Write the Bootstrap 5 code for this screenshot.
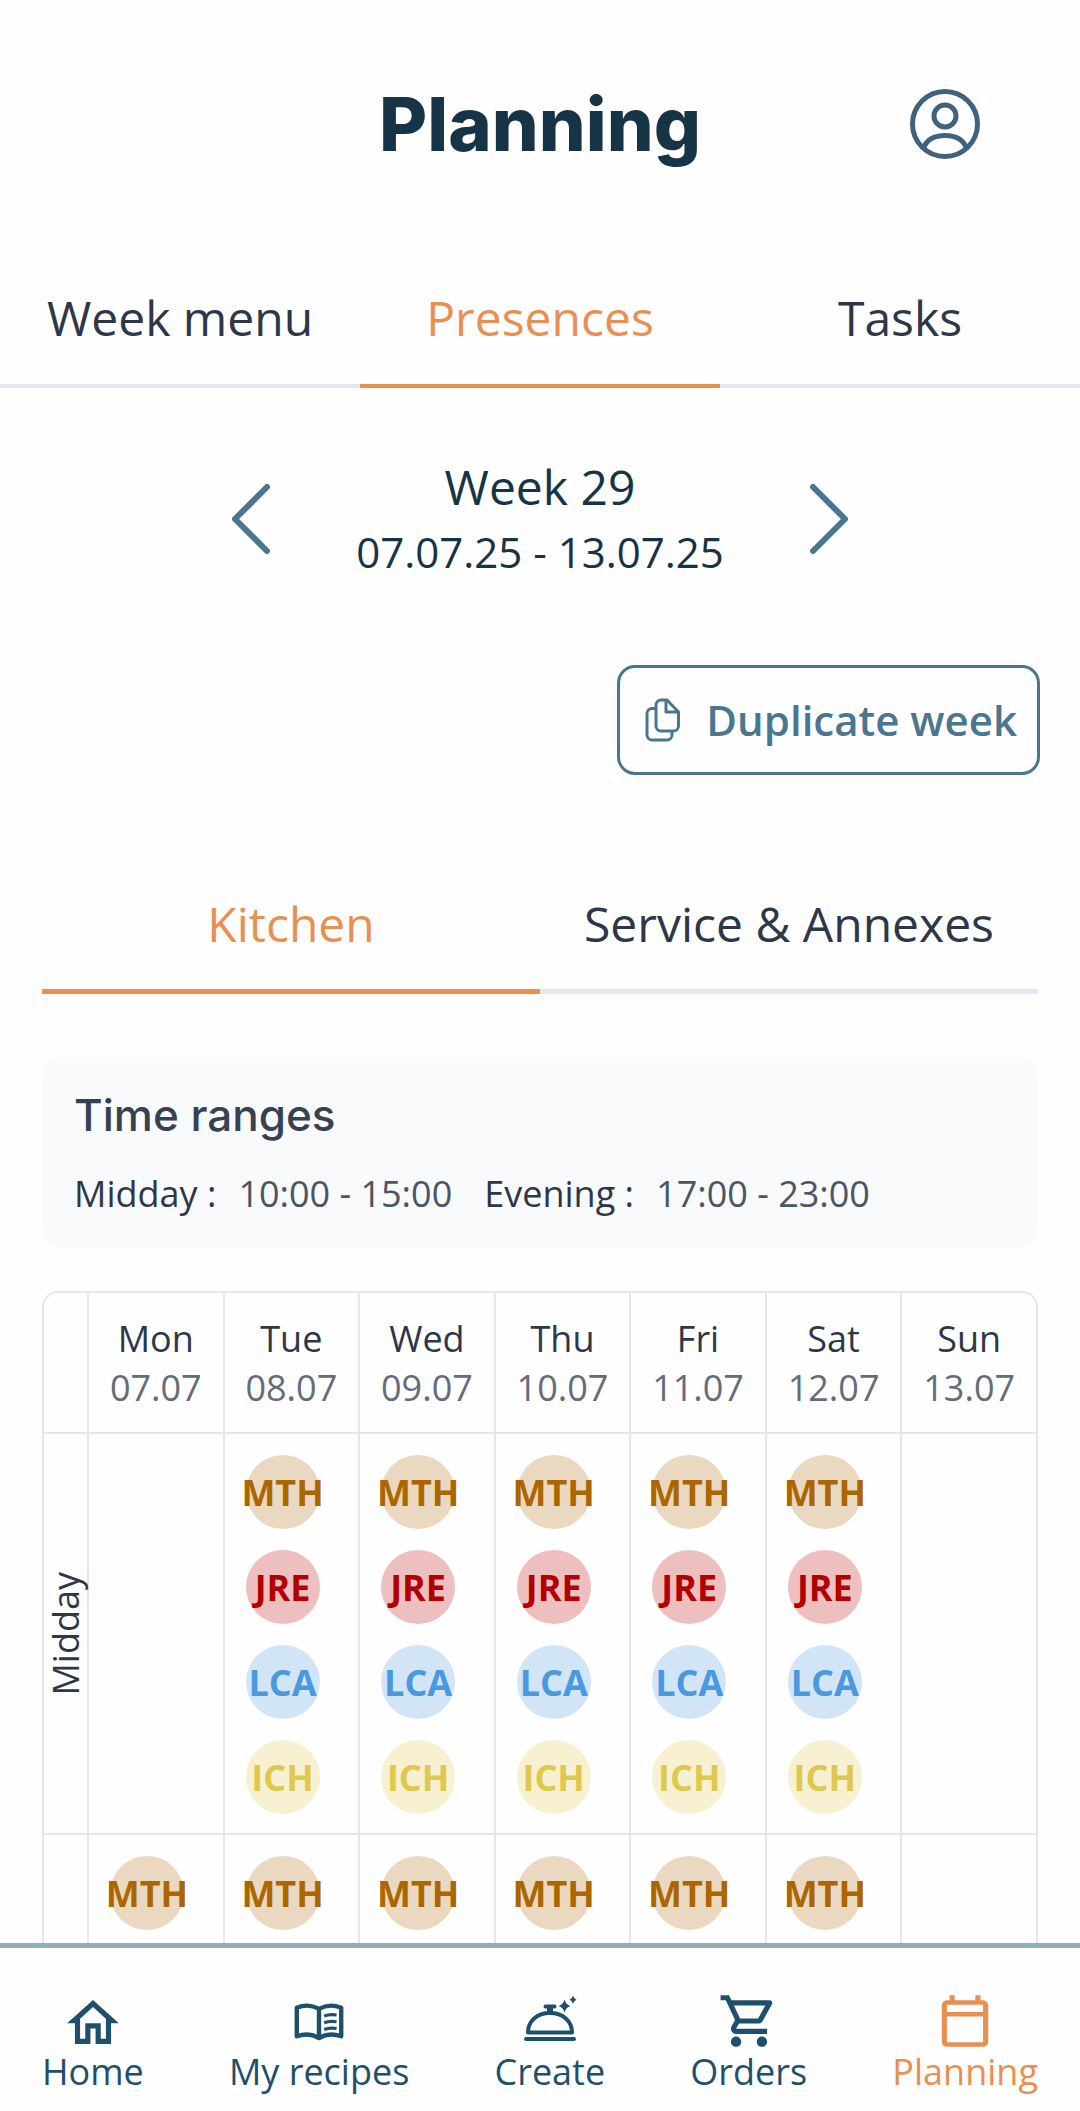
<!DOCTYPE html>
<html lang="en">
<head>
<meta charset="utf-8">
<meta name="viewport" content="width=device-width, initial-scale=1">
<title>Planning</title>
<link href="https://cdn.jsdelivr.net/npm/bootstrap@5.3.0/dist/css/bootstrap.min.css" rel="stylesheet">
<style>
  :root { --ink: #2d3748; --navy: #173447; --steel: #4a7690; --orange: #e88f51; --rule: #e2e8f0; --grid: #e5e7eb; --deep: #1f506b; }
  body { font-family: "Open Sans", "Noto Sans", sans-serif; color: var(--ink); background: #fefefe; font-size: 36px; line-height: 49px; }
  .screen-main { scrollbar-width: none; }
  .app-head { display: grid; grid-template-columns: 1fr auto 1fr; padding: 76px 100px 0; }
  .app-title { grid-column: 2; font-family: Inter, sans-serif; font-weight: 800; font-size: 74px; line-height: 96px; color: var(--navy); }
  .profile-btn { color: #40627c; }
  .tab-strip .nav-link { font-size: 48px; line-height: 64px; color: var(--ink); border-radius: 0; border-bottom: 4px solid var(--rule); padding: 34px 0; }
  .tab-strip .nav-link.active { color: var(--orange); border-color: var(--orange); }
  .top-tabs { margin-top: 80px; }
  .week-nav { gap: 86px; margin-top: 66px; color: var(--navy); }
  .week-nav .btn { color: var(--steel); }
  .week-name { font-size: 48px; line-height: 66px; }
  .week-dates { font-size: 42px; line-height: 64px; }
  .btn-dup { gap: 25px; color: var(--steel); border: 3px solid var(--steel); border-radius: 18px; font-size: 42px; font-weight: 600; line-height: 58px; padding: 23px 20px 23px 25px; }
  .dup-row { margin: 81px 40px 0; }
  .page-body { margin: 81px 42px 0; }
  .page-body .tab-strip .nav-link { border-bottom-width: 5px; padding: 36px 0 33px; }
  .range-box { background: #f8fafc; border-radius: 20px; margin-top: 63px; padding: 27px 32px 31px; }
  .range-box h2 { font-family: Inter, sans-serif; font-weight: 500; font-size: 44px; line-height: 62px; margin-bottom: 23px; color: #374151; }
  .range-gap { gap: 22px; }
  .range-box dl { gap: 32px; }
  .range-box dt { font-weight: 400; }
  .range-box dd { color: #4b5563; }
  .roster { margin-top: 42px; border: 2px solid var(--rule); border-radius: 16px; overflow: hidden; }
  .roster table { table-layout: fixed; border-collapse: separate; border-spacing: 0; }
  .roster th, .roster td { font-weight: 400; padding: 0; border-left: 2px solid var(--grid); border-bottom: 2px solid var(--grid); vertical-align: top; }
  .roster tr > :first-child { border-left: 0; }
  .roster thead th { padding: 21px 0 20px; }
  .roster .slot-col { width: 43px; }
  .roster tbody th { vertical-align: middle; }
  .side-label { writing-mode: vertical-rl; transform: rotate(180deg); line-height: 43px; }
  .day-date { color: #646c7a; }
  .crew { gap: 21px; padding: 21px 21px 19px; }
  .who { width: 74px; height: 74px; font-weight: 700; }
  .who-mth { color: #ab6600; background: #ead8c0; }
  .who-jre { color: #b20000; background: #edbfbf; }
  .who-lca { color: #4a98dd; background: #d2e5f6; }
  .who-ich { color: #dfc84e; background: #f7f0d1; }
  .evening-row { height: 400px; }
  .dock { border-top: 5px solid #91adbd; padding: 47px 42px 15px; background: #fefefe; }
  .dock a { color: var(--deep); }
  .dock a.active { color: var(--orange); }
</style>
</head>
<body>
<div class="vh-100 d-flex flex-column">
  <main class="screen-main flex-grow-1 overflow-auto">
    <header class="app-head align-items-center">
      <h1 class="app-title m-0">Planning</h1>
      <button class="btn p-0 border-0 profile-btn ms-auto d-flex" type="button" aria-label="Profile">
        <svg width="70" height="70" viewBox="0 0 70 70" fill="none" stroke="currentColor" stroke-width="5"><circle cx="35" cy="35" r="32.5"/><circle cx="35" cy="27" r="11"/><path d="M13.500 59C17 50 25 46.500 35 46.500S53 50 56.500 59"/></svg>
      </button>
    </header>

    <nav class="nav nav-justified tab-strip top-tabs flex-nowrap text-center" aria-label="Sections">
      <a class="nav-link" href="#menu">Week menu</a>
      <a class="nav-link active" href="#presences">Presences</a>
      <a class="nav-link" href="#tasks">Tasks</a>
    </nav>

    <div class="week-nav d-flex justify-content-center align-items-center text-center">
      <button class="btn p-0 border-0 d-flex" type="button" aria-label="Previous week"><svg width="38" height="70" viewBox="0 0 38 70" fill="none" stroke="currentColor" stroke-width="6" stroke-linecap="round" stroke-linejoin="round"><path d="M35 3 3 35l32 32"/></svg></button>
      <div>
        <div class="week-name">Week 29</div>
        <div class="week-dates">07.07.25 - 13.07.25</div>
      </div>
      <button class="btn p-0 border-0 d-flex" type="button" aria-label="Next week"><svg width="38" height="70" viewBox="0 0 38 70" fill="none" stroke="currentColor" stroke-width="6" stroke-linecap="round" stroke-linejoin="round"><path d="m3 3 32 32L3 67"/></svg></button>
    </div>

    <div class="dup-row d-flex justify-content-end">
      <button class="btn btn-dup d-flex align-items-center" type="button">
        <svg width="36" height="44" viewBox="0 0 36 44" fill="none" stroke="currentColor" stroke-width="3" stroke-linejoin="round"><path d="M21 2h-5a5 5 0 0 0-5 5v21a5 5 0 0 0 5 5h12.500a5 5 0 0 0 5-5V14L22 2z"/><path d="M21 2v12h12.500M11 10.500H7a5 5 0 0 0-5 5V37a5 5 0 0 0 5 5h15a5 5 0 0 0 5-5v-4"/></svg>
        <span>Duplicate week</span>
      </button>
    </div>

    <div class="page-body">
      <nav class="nav nav-justified tab-strip flex-nowrap text-center" aria-label="Teams">
        <a class="nav-link active" href="#kitchen">Kitchen</a>
        <a class="nav-link" href="#service">Service &amp; Annexes</a>
      </nav>

      <section class="range-box">
        <h2>Time ranges</h2>
        <dl class="d-flex flex-wrap m-0">
          <div class="d-flex range-gap"><dt>Midday :</dt><dd class="m-0">10:00 - 15:00</dd></div>
          <div class="d-flex range-gap"><dt>Evening :</dt><dd class="m-0">17:00 - 23:00</dd></div>
        </dl>
      </section>

      <div class="roster">
        <table class="w-100">
          <thead class="text-center">
            <tr>
              <th class="slot-col"></th>
              <th scope="col">Mon<div class="day-date">07.07</div></th>
              <th scope="col">Tue<div class="day-date">08.07</div></th>
              <th scope="col">Wed<div class="day-date">09.07</div></th>
              <th scope="col">Thu<div class="day-date">10.07</div></th>
              <th scope="col">Fri<div class="day-date">11.07</div></th>
              <th scope="col">Sat<div class="day-date">12.07</div></th>
              <th scope="col">Sun<div class="day-date">13.07</div></th>
            </tr>
          </thead>
          <tbody id="shifts"></tbody>
        </table>
      </div>
    </div>
  </main>

  <nav class="dock d-flex justify-content-between text-center flex-shrink-0" aria-label="Main">
    <a class="d-flex flex-column align-items-center text-decoration-none" href="#home">
      <svg width="62" height="52" viewBox="0 2 24 20" fill="currentColor"><path d="m12 5.690 5 4.500V18h-2v-6H9v6H7v-7.810l5-4.500M12 3 2 12h3v8h6v-6h2v6h6v-8h3L12 3z" transform="translate(0 .9)"/></svg>
      Home</a>
    <a class="d-flex flex-column align-items-center text-decoration-none" href="#recipes">
      <svg width="62" height="52" viewBox="0 2 24 20" fill="none" stroke="currentColor" stroke-width="1.700" stroke-linejoin="round"><path d="M12 7.300C9.300 5.800 6.300 5.700 3.400 6.900v11c2.900-1 5.900-.9 8.600.7 2.700-1.600 5.700-1.700 8.600-.7v-11C17.700 5.700 14.700 5.800 12 7.300zv11"/><path stroke-width="1.200" d="M14 10.100c1.500-.6 3-.7 4.800-.4M14 12.700c1.500-.6 3-.7 4.800-.4M14 15.300c1.500-.6 3-.7 4.800-.4"/></svg>
      My recipes</a>
    <a class="d-flex flex-column align-items-center text-decoration-none" href="#create">
      <svg width="62" height="52" viewBox="0 0 62 52" fill="none" stroke="currentColor" stroke-width="4" stroke-linejoin="round"><path d="M9 37.500C9 26 18 18 31 18s22 8 22 19.500z"/><path stroke-linecap="round" d="M7 44h48M26.500 11.500h9"/><path stroke-width="6" d="M31 11v7"/><path fill="currentColor" stroke="none" d="M45.500 4.500Q46.800 9.700 51.500 11 46.800 12.300 45.500 17.500 44.200 12.300 39.500 11 44.200 9.700 45.500 4.500zM54 .5q.8 3.400 3.500 4.200Q54.800 5.500 54 9q-.8-3.500-3.500-4.300Q53.200 3.900 54 .5z"/></svg>
      Create</a>
    <a class="d-flex flex-column align-items-center text-decoration-none" href="#orders">
      <svg width="62" height="52" viewBox="0 2 24 20" fill="currentColor"><path d="M15.550 13c.75 0 1.410-.41 1.750-1.030l3.580-6.490C21.250 4.820 20.770 4 20.010 4H5.210l-.94-2H1v2h2l3.600 7.590-1.350 2.440C4.520 15.370 5.480 17 7 17h12v-2H7l1.100-2h7.450zM6.160 6h12.150l-2.760 5H8.530L6.160 6zM7 18c-1.100 0-1.990.9-1.990 2S5.900 22 7 22s2-.9 2-2-.9-2-2-2zm10 0c-1.100 0-1.990.9-1.990 2s.89 2 1.990 2 2-.9 2-2-.9-2-2-2z"/></svg>
      Orders</a>
    <a class="d-flex flex-column align-items-center text-decoration-none active" href="#planning" aria-current="page">
      <svg width="62" height="52" viewBox="0 2 24 20" fill="currentColor"><path d="M19 4h-1V2h-2v2H8V2H6v2H5c-1.100 0-2 .9-2 2v14c0 1.100.9 2 2 2h14c1.100 0 2-.9 2-2V6c0-1.100-.9-2-2-2zm0 16.200H5V10.300h14v9.900zm0-11.700H5V5.700h14v2.800z"/></svg>
      Planning</a>
  </nav>
</div>
<script>
  // One entry per shift: row label and the crew initials for each day, Monday to Sunday.
  const full = ['MTH', 'JRE', 'LCA', 'ICH'];
  const shifts = [
    { label: 'Midday', days: [[], full, full, full, full, full, []] },
    { label: '', cls: 'evening-row', days: [['MTH'], ['MTH'], ['MTH'], ['MTH'], ['MTH'], ['MTH'], []] }
  ];
  const cell = names => names.length
    ? `<td><div class="crew d-flex flex-column">${names.map(n => `<span class="who who-${n.toLowerCase()} rounded-circle d-flex align-items-center justify-content-center">${n}</span>`).join('')}</div></td>`
    : '<td></td>';
  document.getElementById('shifts').innerHTML = shifts.map(s =>
    `<tr class="${s.cls || ''}"><th scope="row">${s.label ? `<span class="side-label d-block">${s.label}</span>` : ''}</th>${s.days.map(cell).join('')}</tr>`).join('');
</script>
<script src="https://cdn.jsdelivr.net/npm/bootstrap@5.3.0/dist/js/bootstrap.bundle.min.js"></script>
</body>
</html>
